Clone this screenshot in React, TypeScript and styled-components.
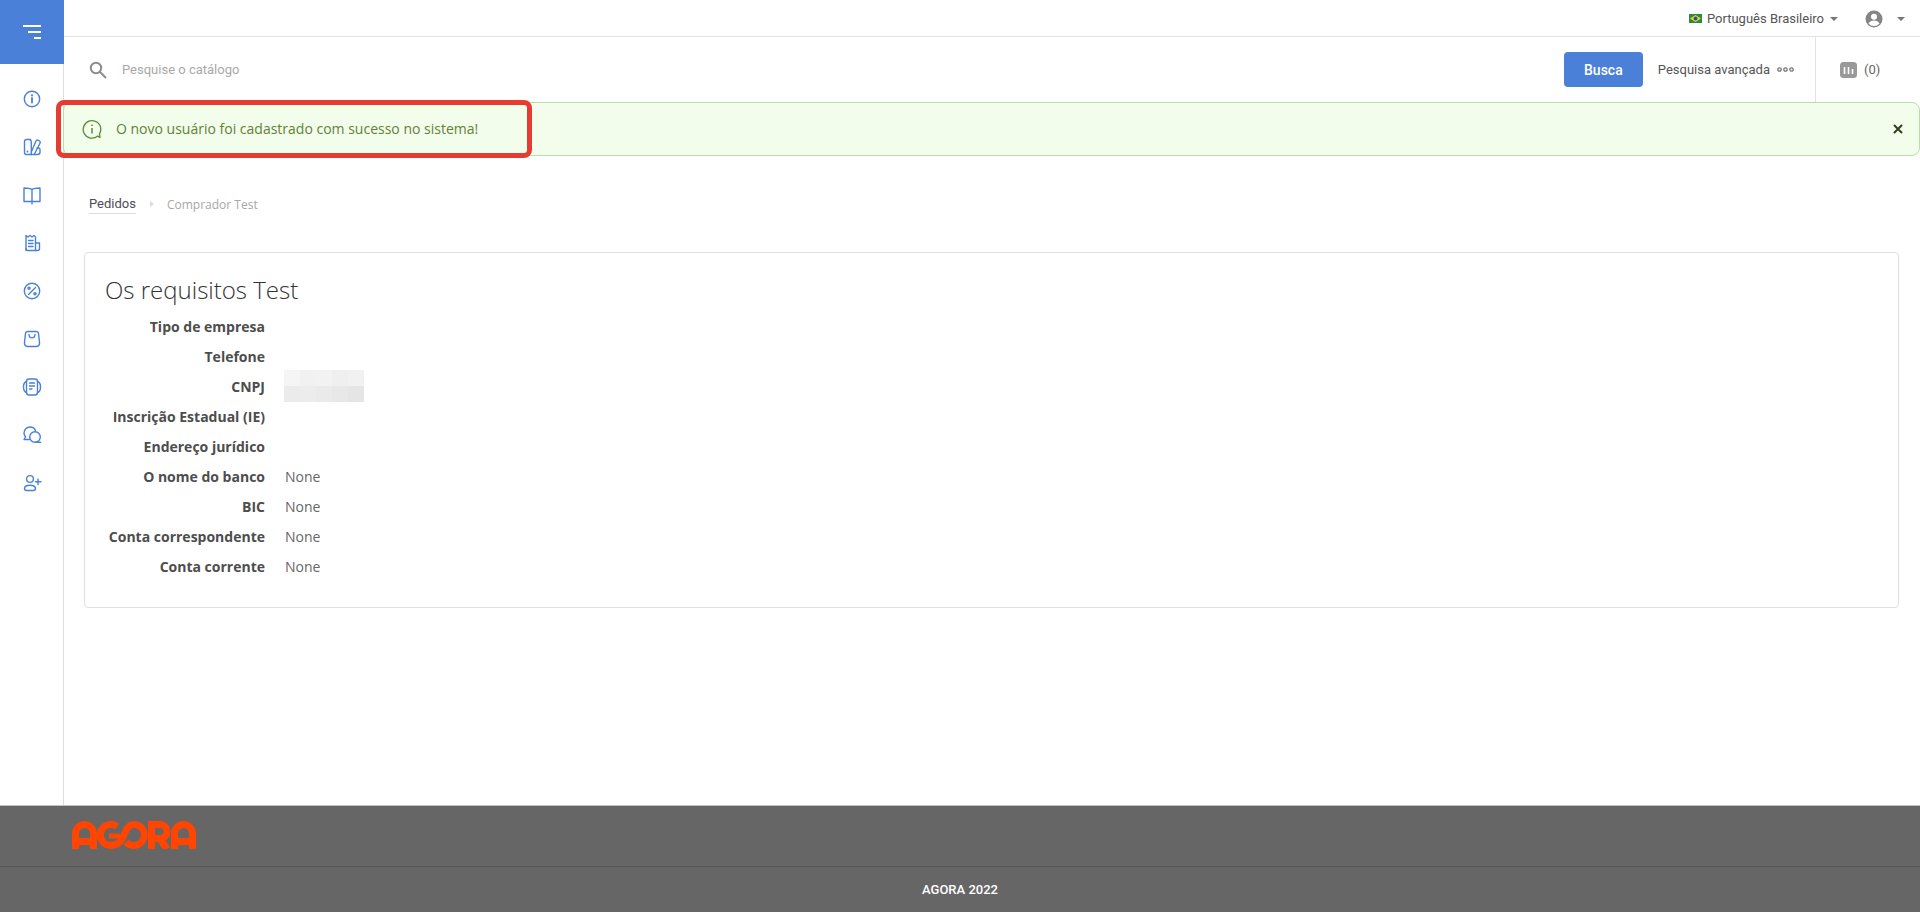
import styled, { createGlobalStyle } from "styled-components";

const GlobalStyle = createGlobalStyle`
  html, body { margin: 0; padding: 0; background: #fff; }
  body { font-family: "Roboto", "Liberation Sans", sans-serif; color: #4a4a4a; }
  * { box-sizing: border-box; }
`;

const Page = styled.div`
  display: flex;
  flex-direction: column;
  min-height: 100vh;
`;
const Body = styled.div`
  display: flex;
  flex: 1;
`;
const Sidebar = styled.aside`
  width: 64px;
  flex: none;
  border-right: 1px solid #dedede;
`;
const MenuButton = styled.div`
  height: 64px;
  margin-right: -1px;
  background: #4a80d8;
  display: flex;
  align-items: center;
  justify-content: center;
`;
const SideNav = styled.nav`
  display: flex;
  flex-direction: column;
  padding-top: 11px;
`;
const SideItem = styled.div`
  height: 48px;
  display: flex;
  align-items: center;
  justify-content: center;
`;
const Main = styled.main`
  flex: 1;
  min-width: 0;
  position: relative;
`;
const TopBar = styled.div`
  height: 37px;
  border-bottom: 1px solid #e2e2e2;
  display: flex;
  align-items: center;
  justify-content: flex-end;
  padding-right: 15px;
  padding-top: 1px;
  font-size: 13px;
  color: #555;
`;
const Lang = styled.div`
  display: flex;
  align-items: center;
  gap: 5px;
  margin-right: 27px;
`;
const Caret = styled.span`
  width: 0;
  height: 0;
  border-left: 4px solid transparent;
  border-right: 4px solid transparent;
  border-top: 4px solid #777;
  margin-left: 1px;
`;
const UserCaret = styled(Caret)`
  margin-left: 14px;
`;
const SearchRow = styled.div`
  height: 65px;
  display: flex;
  align-items: center;
  padding-left: 25px;
`;
const SearchText = styled.div`
  flex: 1;
  margin-left: 15px;
  font-size: 13px;
  color: #a9a9a9;
`;
const SearchButton = styled.button`
  width: 79px;
  height: 35px;
  border: none;
  border-radius: 4px;
  background: #4a80d8;
  color: #fff;
  font-family: inherit;
  font-size: 14px;
  font-weight: 500;
  padding: 0;
`;
const Advanced = styled.div`
  display: flex;
  align-items: center;
  gap: 7px;
  margin-left: 15px;
  margin-right: 21px;
  font-size: 13px;
  color: #555;
`;
const Compare = styled.div`
  align-self: stretch;
  width: 105px;
  border-left: 1px solid #e2e2e2;
  display: flex;
  align-items: center;
  gap: 7px;
  padding-left: 24px;
  font-size: 13px;
  color: #666;
`;
const Alert = styled.div`
  height: 54px;
  margin-left: -1px;
  border: 1px solid #b7e0a8;
  border-radius: 8px;
  background: #f3fdeb;
  display: flex;
  align-items: center;
  padding: 0 16px 0 18px;
  color: #5f8238;
  font-family: "Open Sans", sans-serif;
  font-size: 14px;
`;
const AlertText = styled.div`
  flex: 1;
  margin-left: 14px;
  margin-bottom: 1px;
`;
const Highlight = styled.div`
  position: absolute;
  left: -8px;
  top: 100px;
  width: 476px;
  height: 58px;
  border: 5px solid #e53b30;
  border-radius: 8px;
`;
const Breadcrumbs = styled.div`
  display: flex;
  align-items: center;
  margin: 37px 0 0 25px;
  height: 22px;
  font-size: 13px;
`;
const CrumbLink = styled.span`
  color: #4c4c55;
  border-bottom: 1px solid #dcdcdc;
  line-height: 18px;
`;
const CrumbArrow = styled.span`
  width: 0;
  height: 0;
  margin: 0 13px 0 14px;
  border-top: 3px solid transparent;
  border-bottom: 3px solid transparent;
  border-left: 4px solid #dcdcdc;
`;
const CrumbCurrent = styled.span`
  color: #a8a8a8;
  font-family: "Open Sans", sans-serif;
  font-size: 12px;
`;
const Card = styled.section`
  margin: 37px 21px 0 20px;
  height: 356px;
  border: 1px solid #e0e0e0;
  border-radius: 4px;
  padding: 19px 20px;
  font-family: "Open Sans", sans-serif;
`;
const Title = styled.h1`
  margin: 0 0 3px;
  font-size: 24px;
  font-weight: 300;
  line-height: 36px;
  color: #333;
`;
const Fields = styled.dl`
  margin: 0;
  display: grid;
  grid-template-columns: 160px 1fr;
  grid-auto-rows: 30px;
  column-gap: 20px;
  align-items: center;
  font-size: 14px;
`;
const Label = styled.dt`
  text-align: right;
  font-weight: 700;
  color: #4d4d4d;
`;
const Value = styled.dd`
  margin: 0;
  color: #666;
`;
const Blur = styled.div`
  display: grid;
  grid-template-columns: repeat(5, 16px);
  grid-auto-rows: 16px;
  width: 80px;
  margin-left: -1px;
`;
const BlurCell = styled.span<{ $shade: string }>`
  background: ${({ $shade }) => $shade};
`;
const Footer = styled.footer`
  height: 107px;
  background: #666;
  border-top: 1px solid #c4c4c4;
  display: flex;
  flex-direction: column;
`;
const FooterTop = styled.div`
  height: 61px;
  border-bottom: 1px solid #555;
  padding: 15px 0 0 72px;
`;
const FooterBottom = styled.div`
  flex: 1;
  display: flex;
  align-items: center;
  justify-content: center;
  color: #fff;
  font-size: 13px;
  font-weight: 500;
`;

const BLUR_SHADES = [
  "#f5f5f5", "#f1f1f1", "#f2f2f2", "#efefef", "#f1f1f1",
  "#ebebeb", "#ececec", "#eaeaea", "#e8e8e8", "#e5e5e5",
];

const NavIcon = ({ children }: { children: React.ReactNode }) => (
  <svg width="22" height="22" viewBox="0 0 22 22" fill="none" stroke="#4a80d8" strokeWidth="1.4" strokeLinecap="round" strokeLinejoin="round">
    {children}
  </svg>
);

const NAV_ICONS = [
  <>
    <circle cx="11" cy="11" r="7.7" />
    <path d="M11 10v4.5" strokeWidth="1.8" />
    <path d="M11 7.2v.3" strokeWidth="2" />
  </>,
  <>
    <path d="M9 3.500H5.500a2 2 0 0 0-2 2v11a2 2 0 0 0 2 2h11a2.500 2.500 0 0 0 2.500-2.500v-2.500a1.500 1.500 0 0 0-1.500-1.500H16" />
    <path d="M9 3.500c1 .5 1.300 1.200 1.300 2.500v12.500" />
    <path d="M10.500 15.500 15 5c.4-.9 1.200-1.200 2-.8l1.500.8c.8.5 1 1.200.6 2L13.500 18" />
    <path d="M6.500 15.500v.2" strokeWidth="1.800" />
  </>,
  <>
    <path d="M11 5.500c-1.500-1-3.500-1.500-8-1.500v13.500h8 8V4c-4.500 0-6.500.5-8 1.500z" />
    <path d="M11 5.500V20" />
  </>,
  <>
    <path d="M5 18.500V3.500l2 1.500 2-1.500 2 1.500 2-1.500 1.500 1.500v13.500" />
    <path d="M14.500 11H18.500v5.500a2 2 0 0 1-2 2H7a2 2 0 0 1-2-2" />
    <path d="M7.500 8.500h4.500M7.500 11.500h4.500M7.500 14.500h4.500" />
  </>,
  <>
    <circle cx="11" cy="11" r="7.700" />
    <path d="M14.500 7.500l-7 7" />
    <circle cx="8" cy="8.200" r="1.100" />
    <circle cx="14" cy="13.800" r="1.100" />
  </>,
  <>
    <path d="M7 3.500h8c1.500 0 2.300.8 2.500 2l1 9c.3 2.500-1 4-3.500 4H7c-2.500 0-3.800-1.500-3.500-4l1-9c.2-1.200 1-2 2.500-2z" />
    <path d="M8 6.500c0 4.500 6 4.500 6 0" />
  </>,
  <>
    <rect x="5.500" y="3" width="11" height="16" rx="2.500" />
    <path d="M5.500 5.500C3.500 6 2.500 7.500 2.500 11s1 5 3 5.500M16.500 5.500c2 .5 3 2 3 5.500s-1 5-3 5.500" />
    <path d="M8.500 7h5M8.500 10h5M8.500 13h2.500" />
  </>,
  <>
    <path d="M8.500 15.500H3l1.500-2.500C3.500 11.500 3 10.300 3 9c0-3.300 2.700-6 6-6 2.500 0 4.700 1.500 5.500 3.700" />
    <circle cx="14" cy="13" r="5.300" />
    <path d="M15 18.300h4.500" />
  </>,
  <>
    <circle cx="9" cy="7" r="3.400" />
    <path d="M3.500 16.500c0-2 1.800-3.200 5.500-3.200s5.500 1.200 5.500 3.200c0 1.300-.8 2-2 2H5.500c-1.200 0-2-.7-2-2z" />
    <path d="M17 7v5.500M14.500 9.700h5.500" />
  </>,
];

const AgoraLogo = () => (
  <svg width="124" height="28" viewBox="0 0 124 28" fill="none" stroke="#ff4500" strokeWidth="7" role="img" aria-label="AGORA">
    <path d="M3.500 28V12.500a9 9 0 0 1 18 0V28M3 20.500h19" />
    <path d="M45 5.500A10.500 10.500 0 1 0 39 24.500C47 24.500 50 19 52 14C54 8 57 3.500 62 3.500A10.500 10.500 0 1 1 54 21" />
    <path d="M37 15H48" strokeWidth="5" />
    <path d="M79.500 28V3.500H88a6.500 6.500 0 0 1 0 14H82M87 16.500L95 28" />
    <path d="M102.500 28V12.500a9 9 0 0 1 18 0V28M102 20.500h19" />
  </svg>
);

export default function App() {
  return (
    <Page>
      <GlobalStyle />
      <Body>
        <Sidebar>
          <MenuButton>
            <svg width="20" height="16" viewBox="0 0 20 16" stroke="#fff" strokeWidth="2">
              <path d="M1 2h18M6 8h13M12 14h7" />
            </svg>
          </MenuButton>
          <SideNav>
            {NAV_ICONS.map((icon, i) => (
              <SideItem key={i}>
                <NavIcon>{icon}</NavIcon>
              </SideItem>
            ))}
          </SideNav>
        </Sidebar>
        <Main>
          <TopBar>
            <Lang>
              <svg width="13" height="9" viewBox="0 0 13 9">
                <rect width="13" height="9" fill="#2a8a3e" />
                <path d="M6.500 1 12 4.500 6.500 8 1 4.500z" fill="#e6d33a" />
                <circle cx="6.500" cy="4.500" r="1.900" fill="#2f4f8f" />
              </svg>
              Português Brasileiro
              <Caret />
            </Lang>
            <svg width="18" height="18" viewBox="0 0 18 18">
              <circle cx="9" cy="9" r="8.500" fill="#858585" />
              <circle cx="9" cy="6.800" r="3" fill="#fff" />
              <path d="M3.500 13.500c1-2 3.200-3 5.500-3s4.500 1 5.500 3A7 7 0 0 1 9 16a7 7 0 0 1-5.500-2.500z" fill="#fff" />
            </svg>
            <UserCaret />
          </TopBar>
          <SearchRow>
            <svg width="18" height="18" viewBox="0 0 18 18" fill="none" stroke="#8c8c8c" strokeWidth="2">
              <circle cx="7" cy="7" r="5.200" />
              <path d="M11 11l6 6" />
            </svg>
            <SearchText>Pesquise o catálogo</SearchText>
            <SearchButton>Busca</SearchButton>
            <Advanced>
              Pesquisa avançada
              <svg width="17" height="5" viewBox="0 0 17 5" fill="none" stroke="#777" strokeWidth="1.300">
                <circle cx="2.500" cy="2.500" r="1.700" />
                <circle cx="8.500" cy="2.500" r="1.700" />
                <circle cx="14.500" cy="2.500" r="1.700" />
              </svg>
            </Advanced>
            <Compare>
              <svg width="17" height="16" viewBox="0 0 17 16">
                <rect width="17" height="16" rx="3.500" fill="#999" />
                <path d="M4.500 5v7M8.500 5v7M12.500 7v5" stroke="#fff" strokeWidth="1.600" />
              </svg>
              (0)
            </Compare>
          </SearchRow>
          <Alert>
            <svg width="20" height="20" viewBox="0 0 20 20" fill="none" stroke="#5f8a35" strokeWidth="1.300">
              <path d="M18 18.500l-2.300-1.400A8.800 8.800 0 1 1 18.800 10c0 1.800-.5 3.400-1.300 4.800z" strokeLinejoin="round" />
              <path d="M10 9v5.500M10 5.500v1.500" strokeWidth="1.500" />
            </svg>
            <AlertText>O novo usuário foi cadastrado com sucesso no sistema!</AlertText>
            <svg width="10" height="10" viewBox="0 0 10 10" stroke="#2f3f1f" strokeWidth="2">
              <path d="M1 1l8 8M9 1l-8 8" />
            </svg>
          </Alert>
          <Highlight />
          <Breadcrumbs>
            <CrumbLink>Pedidos</CrumbLink>
            <CrumbArrow />
            <CrumbCurrent>Comprador Test</CrumbCurrent>
          </Breadcrumbs>
          <Card>
            <Title>Os requisitos Test</Title>
            <Fields>
              <Label>Tipo de empresa</Label>
              <Value />
              <Label>Telefone</Label>
              <Value />
              <Label>CNPJ</Label>
              <Value>
                <Blur>
                  {BLUR_SHADES.map((shade, i) => (
                    <BlurCell key={i} $shade={shade} />
                  ))}
                </Blur>
              </Value>
              <Label>Inscrição Estadual (IE)</Label>
              <Value />
              <Label>Endereço jurídico</Label>
              <Value />
              <Label>O nome do banco</Label>
              <Value>None</Value>
              <Label>BIC</Label>
              <Value>None</Value>
              <Label>Conta correspondente</Label>
              <Value>None</Value>
              <Label>Conta corrente</Label>
              <Value>None</Value>
            </Fields>
          </Card>
        </Main>
      </Body>
      <Footer>
        <FooterTop>
          <AgoraLogo />
        </FooterTop>
        <FooterBottom>AGORA 2022</FooterBottom>
      </Footer>
    </Page>
  );
}
